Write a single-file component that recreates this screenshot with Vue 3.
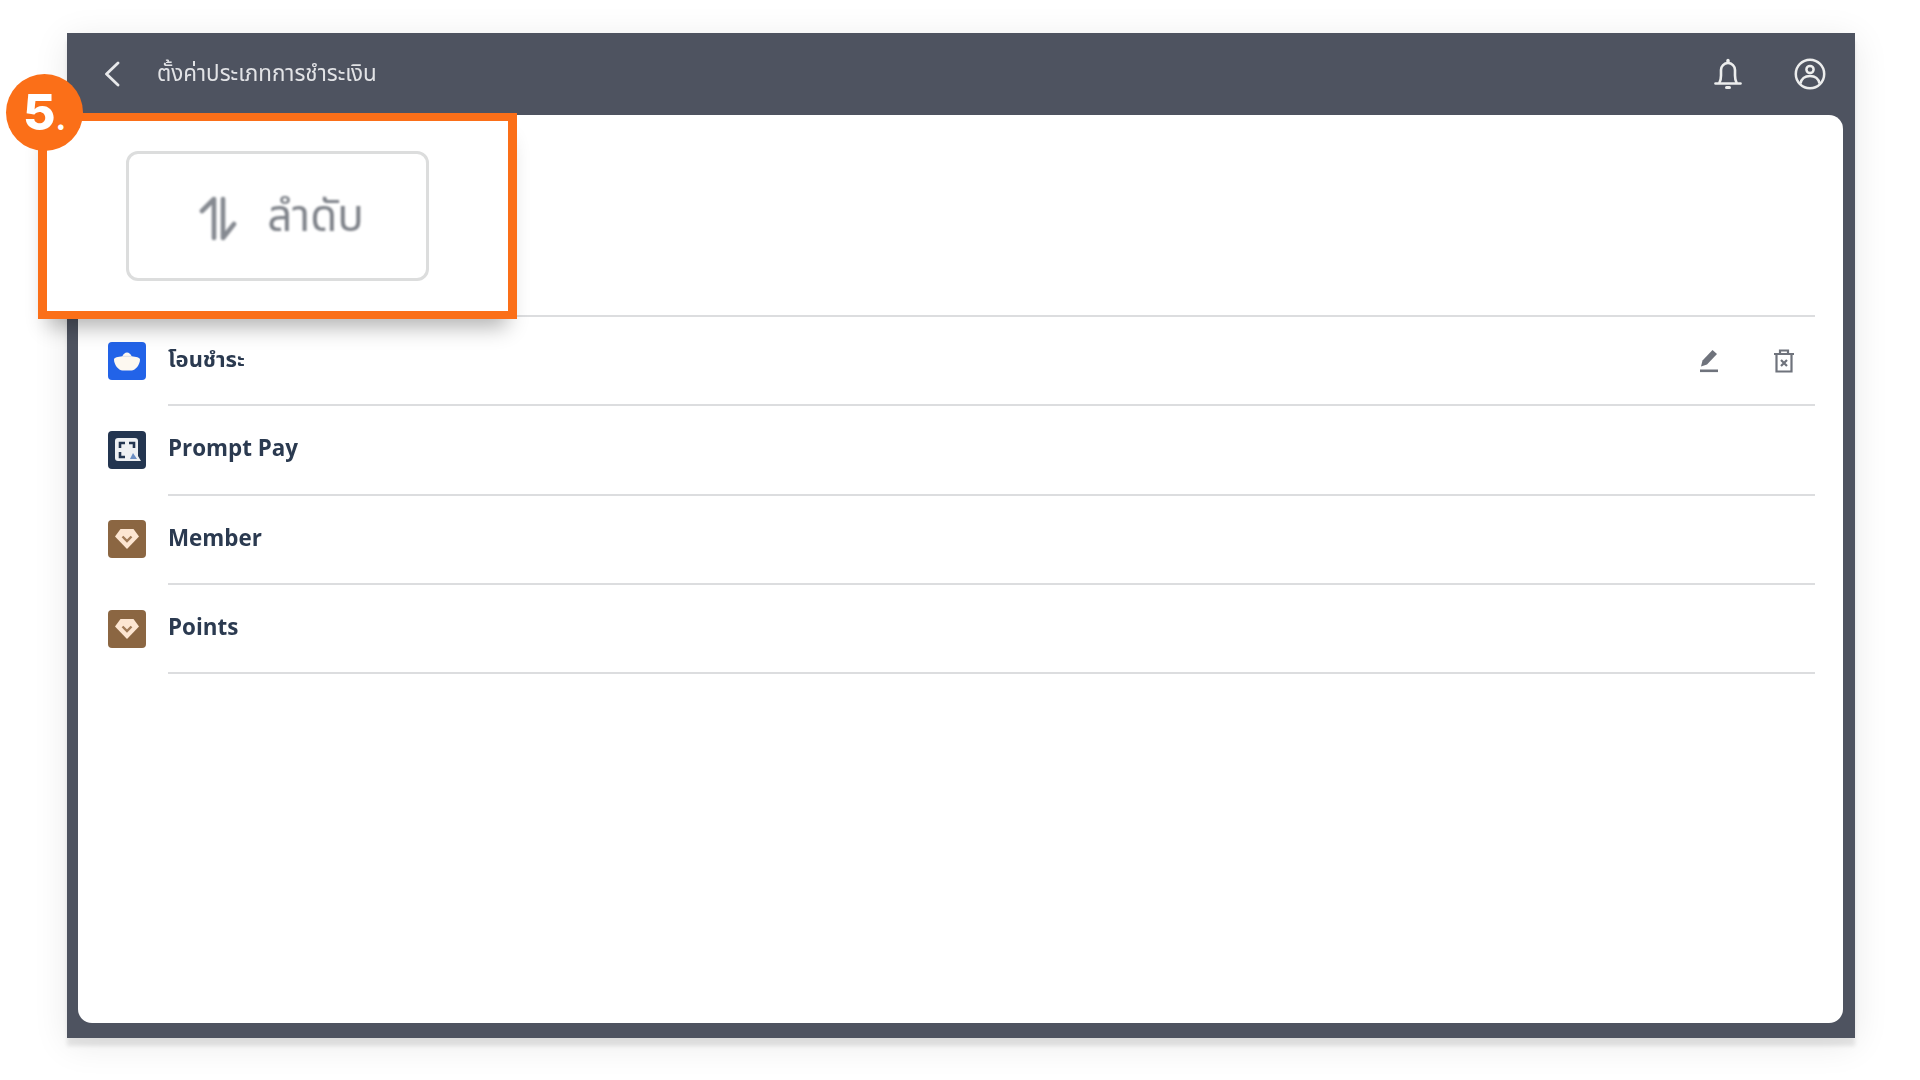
<template>
  <div class="page">
    <div class="window">
      <header class="topbar">
        <button class="back-btn" aria-label="back">
          <svg width="16" height="26" viewBox="0 0 16 26" fill="none" stroke="#e8e9eb" stroke-width="2.8" stroke-linecap="round" stroke-linejoin="round">
            <path d="M14 2 2.500 13 14 24" />
          </svg>
        </button>
        <span class="title">ตั้งค่าประเภทการชำระเงิน</span>
        <div class="top-icons">
          <svg class="soft" width="28" height="32" viewBox="0 0 28 32" fill="none" stroke="#eceded" stroke-width="2.600" stroke-linecap="round" stroke-linejoin="round">
            <path d="M5.500 24.500c1-2 1.500-4 1.500-7V12a7 7 0 0 1 14 0v5.500c0 3 .5 5 1.500 7" />
            <path d="M1.500 25.500h25" />
            <path d="M14 2.500v1.500" stroke-width="3.400" />
            <path d="M12.500 29.500h3" stroke-width="3" />
          </svg>
          <svg class="soft" width="32" height="32" viewBox="0 0 32 32" fill="none" stroke="#eceded" stroke-width="2.500">
            <circle cx="16" cy="16" r="14.200" />
            <circle cx="16" cy="11.500" r="3.600" />
            <path d="M6.500 25.500c1-5 5-7.500 9.500-7.500s8.500 2.500 9.500 7.500" />
          </svg>
        </div>
      </header>

      <main class="card">
        <div class="toolbar"></div>
        <div v-for="item in items" :key="item.name" class="row">
          <span class="row-icon soft" :style="{ background: item.color }">
            <svg v-if="item.type === 'bowl'" width="28" height="22" viewBox="0 0 28 22" fill="#fdf8f0">
              <path d="M1 9.500c0-1.800 4-2.800 8.500-3.200.5-2 2.500-3.800 4.500-3.800s4 1.800 4.500 3.800c4.500.4 8.500 1.400 8.500 3.200 0 5-4.500 11-8.500 11h-9c-4 0-8.500-6-8.500-11z" />
              <path d="M9.500 6.300h9" stroke="#d9dde6" stroke-width="1" />
            </svg>
            <svg v-else-if="item.type === 'qr'" width="30" height="30" viewBox="0 0 30 30" fill="none">
              <path d="M6 3h17a3 3 0 0 1 3 3v15l3 5H6a3 3 0 0 1-3-3V6a3 3 0 0 1 3-3z" fill="#eef0f3" />
              <path d="M8 13V8h5M17 8h5v5M8 17v5h5" stroke="#233550" stroke-width="2.600" />
              <path d="M18 24l3-6 4 6z" fill="#6d8fc4" />
            </svg>
            <svg v-else width="26" height="24" viewBox="0 0 26 24">
              <path d="M6.500 2h13L25 9.500 13 22 1 9.500z" fill="#fde6d2" />
              <path d="M8.500 9.500 13 14l4.500-4.500" fill="none" stroke="#a27c59" stroke-width="2.400" />
            </svg>
          </span>
          <div class="row-body">
            <span class="row-name" :class="{ thai: item.editable }">{{ item.name }}</span>
            <div v-if="item.editable" class="row-actions">
              <svg class="soft" width="20" height="24" viewBox="0 0 20 24" fill="#6f737c">
                <path d="M13.500 1 18 5 8 15.500l-6 2 1.500-6z" />
                <rect x="1" y="20.500" width="18" height="2.600" />
              </svg>
              <svg class="soft" width="22" height="24" viewBox="0 0 22 24" fill="none" stroke="#6f737c" stroke-width="2.200">
                <path d="M1 5h20M7 5V1.500h8V5" />
                <path d="M3.500 5v17.500h15V5" />
                <path d="M8 11l6 6M14 11l-6 6" />
              </svg>
            </div>
          </div>
        </div>
      </main>

      <section class="callout">
        <span class="step-badge">5<small>.</small></span>
        <button class="sort-btn">
          <svg class="sort-icon" width="38" height="46" viewBox="0 0 38 46" fill="none" stroke="#868a91" stroke-width="4.600" stroke-linecap="round" stroke-linejoin="round">
            <path d="M15 43V4L3 16" />
            <path d="M24 4v39l11-14" />
          </svg>
          <span class="sort-label">ลำดับ</span>
        </button>
      </section>
    </div>
  </div>
</template>

<script setup>
const items = [
  { name: 'โอนชำระ', type: 'bowl', color: '#2263e8', editable: true },
  { name: 'Prompt Pay', type: 'qr', color: '#233550', editable: false },
  { name: 'Member', type: 'gem', color: '#8b6642', editable: false },
  { name: 'Points', type: 'gem', color: '#8b6642', editable: false }
]
</script>

<style>
html, body {
  margin: 0;
  background: #fff;
  overflow: hidden;
}
</style>

<style scoped>
.page {
  width: 1920px;
  height: 1080px;
  box-sizing: border-box;
  padding: 33px 65px 42px 67px;
  font-family: "Open Sans", "Noto Sans", "Noto Sans Thai", sans-serif;
}

.window {
  position: relative;
  height: 100%;
  display: flex;
  flex-direction: column;
  background: #4e5360;
  box-shadow: 0 8px 4px rgba(0, 0, 0, 0.09), 0 6px 34px rgba(0, 0, 0, 0.09);
}

.topbar {
  display: flex;
  align-items: center;
  height: 82px;
  flex: none;
  padding: 0 29px 0 37px;
}

.back-btn {
  background: none;
  border: none;
  padding: 0;
  display: flex;
  width: 53px;
  filter: blur(0.4px);
}

.title {
  flex: 1;
  font-size: 22.4px;
  color: #e2e3e6;
  filter: blur(0.6px);
}

.top-icons {
  display: flex;
  align-items: center;
  gap: 52px;
}

.soft {
  filter: blur(0.6px);
}

.card {
  flex: 1;
  margin: 0 12px 15px 11px;
  background: #fff;
  border-radius: 14px;
}

.toolbar {
  height: 200px;
  margin-right: 28px;
  border-bottom: 2px solid #dcdddf;
}

.row {
  display: flex;
  align-items: center;
  height: 89.3px;
  padding: 0 28px 0 30px;
}

.row-icon {
  width: 38px;
  height: 38px;
  flex: none;
  border-radius: 4px;
  margin-right: 22px;
  margin-bottom: 2px;
  display: flex;
  align-items: center;
  justify-content: center;
}

.row-body {
  flex: 1;
  height: 100%;
  box-sizing: border-box;
  display: flex;
  align-items: center;
  justify-content: space-between;
  border-bottom: 2px solid #dcdddf;
}

.row-name {
  font-size: 22.4px;
  font-weight: 700;
  color: #2b3a50;
  margin-bottom: 4px;
  filter: blur(0.6px);
}

.row-name.thai {
  font-size: 22px;
  margin-bottom: 2px;
}

.row-actions {
  display: flex;
  align-items: center;
  gap: 54px;
  margin-right: 20px;
}

.callout {
  position: absolute;
  left: -29px;
  top: 80px;
  width: 479px;
  height: 206px;
  box-sizing: border-box;
  padding: 30px 79px;
  background: #fff;
  border: solid #fb6f18;
  border-width: 8px 9px;
  box-shadow: 0 18px 20px -10px rgba(0, 0, 0, 0.3);
}

.step-badge {
  position: absolute;
  left: -41px;
  top: -47px;
  width: 77px;
  height: 77px;
  border-radius: 50%;
  background: #fb6f18;
  color: #fff;
  font-family: Inter, "Open Sans", sans-serif;
  font-size: 50px;
  font-weight: 800;
  line-height: 77px;
  text-align: center;
}

.step-badge small {
  font-size: 30px;
}

.sort-btn {
  width: 303px;
  height: 130px;
  box-sizing: border-box;
  display: flex;
  align-items: center;
  justify-content: center;
  gap: 30px;
  padding: 3px 0 0 8px;
  background: #fff;
  border: 3px solid #dcdddd;
  border-radius: 12px;
}

.sort-icon {
  filter: blur(1px);
}

.sort-label {
  font-family: "Open Sans", "Noto Sans", "Noto Sans Thai", sans-serif;
  font-size: 44px;
  color: #7d8188;
  filter: blur(0.9px);
}
</style>
